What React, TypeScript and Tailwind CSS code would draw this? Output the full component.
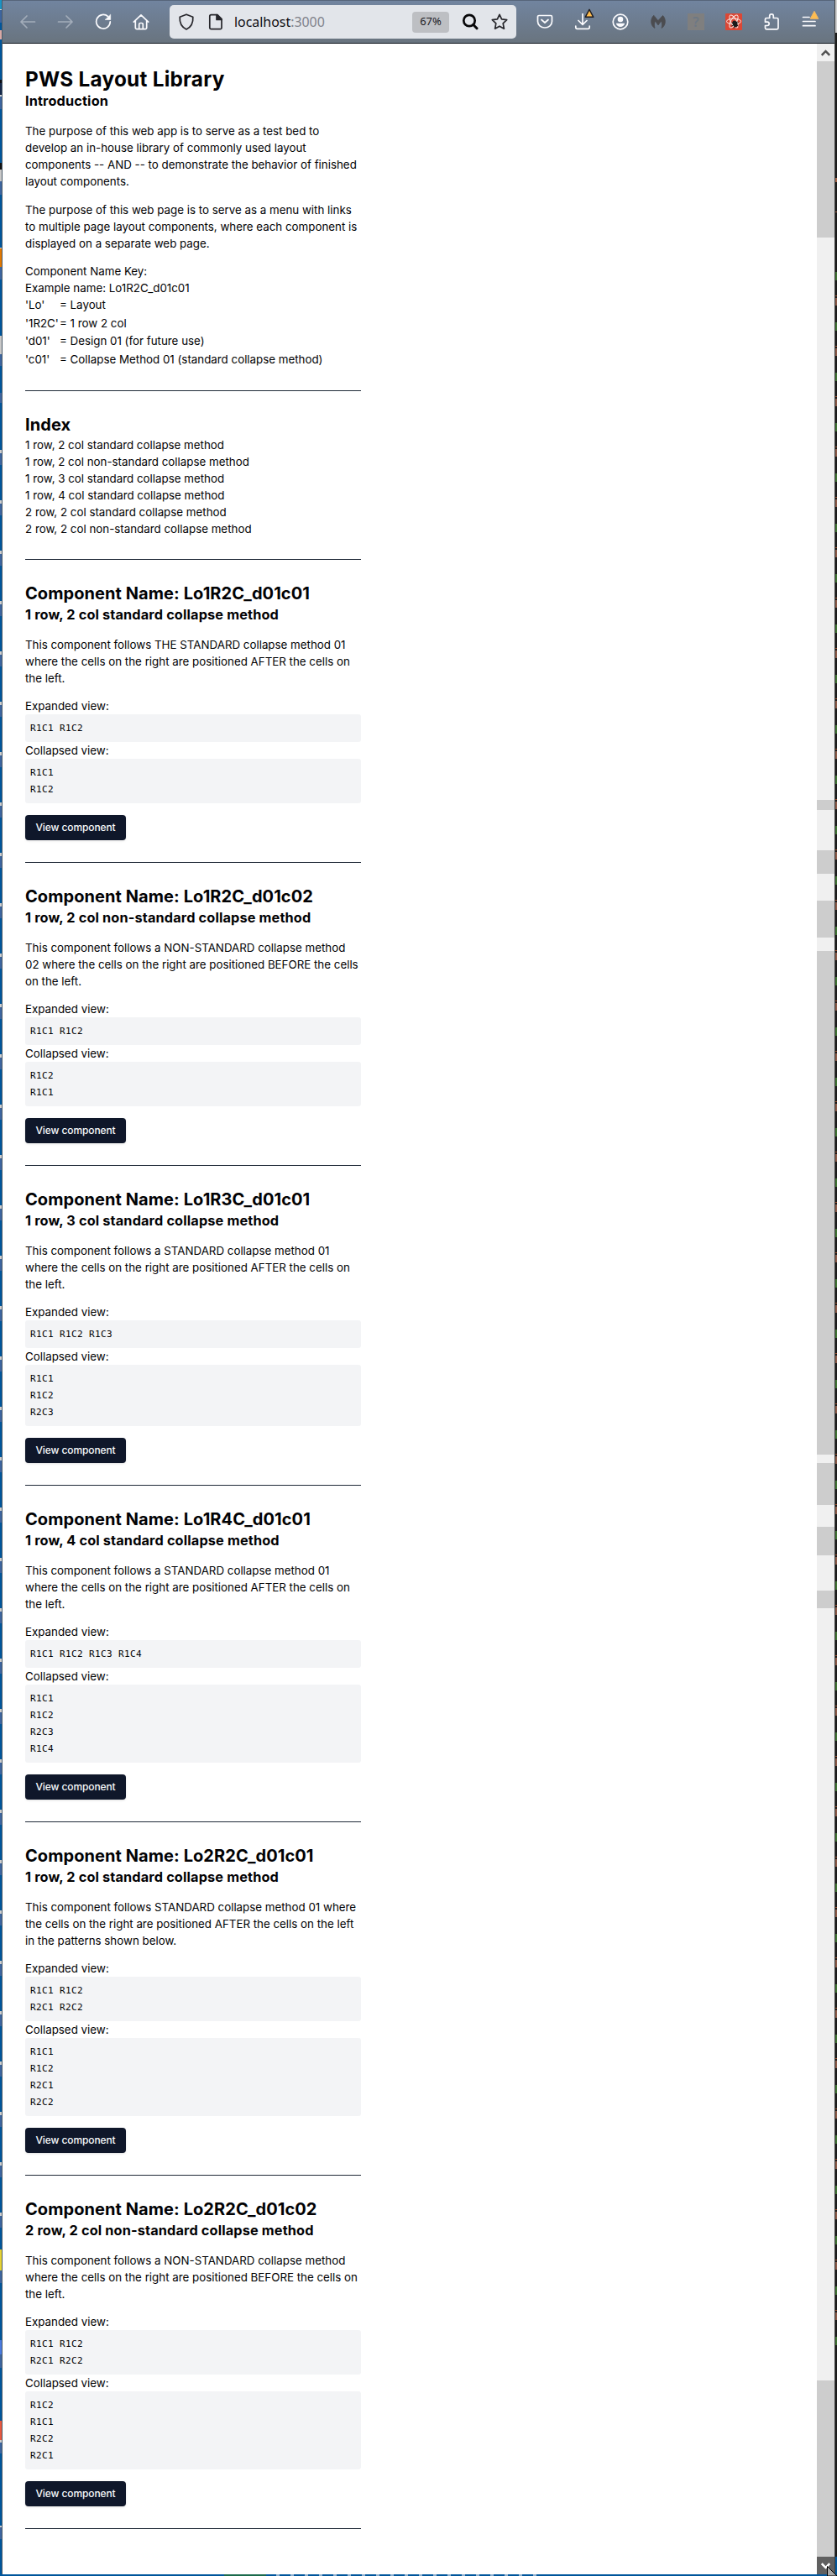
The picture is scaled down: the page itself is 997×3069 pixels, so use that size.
import React from "react";

type Band = { h: string; c: string };

const leftBands: Band[] = [
  { h: "h-[11px]", c: "bg-[#1b93c4]" },
  { h: "h-[1px]", c: "bg-[#d7d7d7]" },
  { h: "h-[15px]", c: "bg-[#3d659f]" },
  { h: "h-[9px]", c: "bg-[#00569c]" },
  { h: "h-[11px]", c: "bg-[#d9a9a5]" },
  { h: "h-[48px]", c: "bg-[#00569c]" },
  { h: "h-[4px]", c: "bg-[#0b0d12]" },
  { h: "h-[14px]", c: "bg-[#14284a]" },
  { h: "h-[2px]", c: "bg-[#d7d7d7]" },
  { h: "h-[15px]", c: "bg-[#3d659f]" },
  { h: "h-[64px]", c: "bg-[#00569c]" },
  { h: "h-[8px]", c: "bg-[#111111]" },
  { h: "h-[14px]", c: "bg-[#c9c9c9]" },
  { h: "h-[16px]", c: "bg-[#3d659f]" },
  { h: "h-[63px]", c: "bg-[#00569c]" },
  { h: "h-[1px]", c: "bg-[#d7d7d7]" },
  { h: "h-[22px]", c: "bg-[#e27800]" },
  { h: "h-[15px]", c: "bg-[#3d659f]" },
  { h: "h-[67px]", c: "bg-[#00569c]" },
  { h: "h-[22px]", c: "bg-[#c9c9c9]" },
  { h: "h-[14px]", c: "bg-[#3d659f]" },
  { h: "h-[32px]", c: "bg-[#00569c]" },
  { h: "h-[12px]", c: "bg-[#3d659f]" },
  { h: "h-[56px]", c: "bg-[#00569c]" },
  {
    h: "h-[2144px]",
    c: "bg-[repeating-linear-gradient(to_bottom,#cfcfcf_0px,#cfcfcf_4px,#3d659f_4px,#3d659f_18px,#00569c_18px,#00569c_60px)]",
  },
  { h: "h-[25px]", c: "bg-[#e6d233]" },
  { h: "h-[15px]", c: "bg-[#3d659f]" },
  { h: "h-[68px]", c: "bg-[#00569c]" },
  { h: "h-[17px]", c: "bg-[#4a7be0]" },
  { h: "h-[16px]", c: "bg-[#3d659f]" },
  { h: "h-[63px]", c: "bg-[#00569c]" },
  { h: "h-[23px]", c: "bg-[#e8583f]" },
  { h: "h-[3px]", c: "bg-[#cfcfcf]" },
  { h: "h-[13px]", c: "bg-[#3d659f]" },
  { h: "h-[86px]", c: "bg-[#00569c]" },
  { h: "h-[2px]", c: "bg-[#cfcfcf]" },
  { h: "h-[14px]", c: "bg-[#3d659f]" },
  { h: "h-[43px]", c: "bg-[#00569c]" },
];

const scrollBands: Band[] = [
  { h: "h-[210px]", c: "bg-[#cdcdcd]" },
  { h: "h-[670px]", c: "bg-[#f0f0f0]" },
  { h: "h-[12px]", c: "bg-[#cdcdcd]" },
  { h: "h-[48px]", c: "bg-[#f0f0f0]" },
  { h: "h-[28px]", c: "bg-[#cdcdcd]" },
  { h: "h-[32px]", c: "bg-[#f0f0f0]" },
  { h: "h-[44px]", c: "bg-[#cdcdcd]" },
  { h: "h-[16px]", c: "bg-[#f0f0f0]" },
  { h: "h-[600px]", c: "bg-[#cdcdcd]" },
  { h: "h-[10px]", c: "bg-[#f0f0f0]" },
  { h: "h-[50px]", c: "bg-[#cdcdcd]" },
  { h: "h-[26px]", c: "bg-[#f0f0f0]" },
  { h: "h-[34px]", c: "bg-[#cdcdcd]" },
  { h: "h-[42px]", c: "bg-[#f0f0f0]" },
  { h: "h-[21px]", c: "bg-[#cdcdcd]" },
  { h: "h-[920px]", c: "bg-[#f0f0f0]" },
  { h: "h-[210px]", c: "bg-[#cdcdcd]" },
];

function Bands({ items }: { items: Band[] }) {
  return (
    <>
      {items.map((b, i) => (
        <div key={i} className={`w-full shrink-0 ${b.h} ${b.c}`} />
      ))}
    </>
  );
}

function Icon({ children, w = 20, className = "" }: { children: React.ReactNode; w?: number; className?: string }) {
  return (
    <svg
      width={w}
      height={w}
      viewBox="0 0 20 20"
      fill="none"
      stroke="currentColor"
      strokeWidth="1.7"
      strokeLinecap="round"
      strokeLinejoin="round"
      className={`shrink-0 ${className}`}
    >
      {children}
    </svg>
  );
}

function Toolbar() {
  return (
    <header className="flex h-[52px] shrink-0 items-center border-t border-b border-t-[#56657a] border-b-[#0d141d] bg-linear-to-b from-[#71849f] to-[#69747f] text-[#fbfbfe]">
      <div className="flex w-[199px] items-center gap-[25px] pl-5">
        <Icon className="text-[#a3adba]">
          <path d="M18.5 10H2M9 3L2 10l7 7" />
        </Icon>
        <Icon className="text-[#a3adba]">
          <path d="M1.500 10H18M11 3l7 7-7 7" />
        </Icon>
        <Icon>
          <path d="M15.600 3.600A8.300 8.300 0 1 0 18.300 9.800" />
          <path d="M18.700 1.500V7.500H12.500Z" fill="currentColor" strokeWidth="0.6" />
        </Icon>
        <Icon>
          <path d="M1.300 10.200L10 1.800l8.700 8.400M3.300 8.500V17a1.700 1.700 0 0 0 1.700 1.700H15a1.700 1.700 0 0 0 1.700-1.700V8.500M7.700 18.500V13a1.500 1.500 0 0 1 1.500-1.500h1.600a1.500 1.500 0 0 1 1.500 1.500v5.500" />
        </Icon>
      </div>
      <div className="flex h-10 w-[413px] items-center rounded-[5px] bg-[#e2e5ea] pl-[10px] text-[#26262b]">
        <Icon>
          <path d="M10 1.200L17.800 4.200C18.200 10 16 16 10 19 4 16 1.800 10 2.200 4.200Z" />
        </Icon>
        <Icon className="ml-[15px]">
          <path d="M4.500 1.700H12l5 5V17a1.700 1.700 0 0 1-1.700 1.700H4.500A1.700 1.700 0 0 1 2.800 17V3.400A1.700 1.700 0 0 1 4.500 1.700Z" />
          <path d="M11 1.500L17.200 7.500H11Z" fill="currentColor" />
        </Icon>
        <div className="ml-3 w-[212px] font-['Noto_Sans'] text-[15.900px] leading-6 text-[#0c0c12]">
          localhost<span className="text-[#80828a]">:3000</span>
        </div>
        <div className="flex h-[25px] w-11 items-center justify-center rounded-[4px] bg-[#bdbfc3] font-['Noto_Sans'] text-[13px] text-[#1a1a1f]">
          67%
        </div>
        <Icon className="ml-[15px] text-[#070709]">
          <circle cx="9" cy="8.500" r="6.700" strokeWidth="2.700" />
          <path d="M13.800 13.500L18 17.800" strokeWidth="3" />
        </Icon>
        <Icon className="ml-[15px]">
          <path d="M10 1.300l2.600 5.600 6.100.8-4.500 4.200 1.200 6.300L10 15.200l-5.400 3 1.200-6.300L1.300 7.700l6.100-.8Z" />
        </Icon>
      </div>
      <div className="ml-6 flex items-center gap-[25px]">
        <Icon>
          <path d="M3 2.500H17a1.500 1.500 0 0 1 1.500 1.500V9.500a8.500 7.500 0 0 1-17 0V4A1.500 1.500 0 0 1 3 2.500ZM6 7.500L10 11l4-3.500" />
        </Icon>
        <div className="relative">
          <Icon>
            <path d="M10 0.500V13M5 8.500L10 13.300l5-4.800M1.800 15v1.500A1.800 1.800 0 0 0 3.600 18.300H16.400A1.800 1.800 0 0 0 18.200 16.500V15" />
          </Icon>
          <svg width="12" height="12" viewBox="0 0 12 12" className="absolute -top-[6px] left-[12px]">
            <path d="M6 1.300L10.800 10.300H1.200Z" fill="#ffbd4f" stroke="#1d1c22" strokeWidth="1.400" strokeLinejoin="round" />
          </svg>
        </div>
        <Icon>
          <circle cx="10" cy="10" r="8.800" />
          <circle cx="10" cy="7" r="3.300" fill="currentColor" stroke="none" />
          <path d="M4.800 11.800H15.200C14.800 14.500 12.500 16 10 16S5.200 14.500 4.800 11.800Z" fill="currentColor" stroke="none" />
        </Icon>
        <Icon className="text-[#4b4c50]">
          <path
            d="M4.500 2.500C.8 6 .8 12.500 4 16L6 17.500C5 14 5.200 11.500 6.500 9L10 14l3.500-5C14.800 11.500 15 14 14 17.500L16 16C19.200 12.500 19.200 6 15.500 2.500L10 8.500Z"
            fill="currentColor"
            strokeWidth="0.8"
          />
        </Icon>
        <div className="flex size-5 items-center justify-center bg-[#7f7f7f] font-['Noto_Sans'] text-[16px] leading-none font-semibold text-[#6d7885]">
          ?
        </div>
        <svg width="20" height="20" viewBox="0 0 20 20" className="rounded-[1px] bg-[#dc4735]">
          <g fill="none" stroke="#fbe9e6" strokeWidth="1">
            <ellipse cx="10" cy="9.500" rx="8.500" ry="3.400" />
            <ellipse cx="10" cy="9.500" rx="8.500" ry="3.400" transform="rotate(60 10 9.500)" />
            <ellipse cx="10" cy="9.500" rx="8.500" ry="3.400" transform="rotate(120 10 9.500)" />
          </g>
          <ellipse cx="11.500" cy="12.500" rx="2.700" ry="4" fill="#1b1b1b" transform="rotate(-25 11.500 12.500)" />
          <path d="M7.500 11l8 4M7.500 15l8-4.500M10 17.500l4-8" stroke="#1b1b1b" strokeWidth="1" />
        </svg>
        <Icon>
          <path d="M7.700 5.500V3.200a2.300 2.300 0 0 1 4.600 0V5.500H16.500a1.500 1.500 0 0 1 1.500 1.500V17.300a1.500 1.500 0 0 1-1.500 1.500H4A1.500 1.500 0 0 1 2.500 17.300V14.500H5a2 2 0 0 0 0-4.300H2.500V7A1.500 1.500 0 0 1 4 5.500Z" />
        </Icon>
        <div className="relative">
          <Icon>
            <path d="M2.500 4.500H10M2.500 9.500H17M2.500 14.700H17" />
          </Icon>
          <svg width="12" height="12" viewBox="0 0 12 12" className="absolute -top-[4px] left-[10px]">
            <path d="M6 1.300L10.800 10.300H1.200Z" fill="#ffbd4f" stroke="#f0b765" strokeWidth="1" strokeLinejoin="round" />
          </svg>
        </div>
      </div>
    </header>
  );
}

const nameKey = [
  { k: "'Lo'", v: "Layout", h: "h-[22px]" },
  { k: "'1R2C'", v: "1 row 2 col", h: "h-[21px]" },
  { k: "'d01'", v: "Design 01 (for future use)", h: "h-[22px]" },
  { k: "'c01'", v: "Collapse Method 01 (standard collapse method)", h: "h-[21px]" },
];

const index = [
  "1 row, 2 col standard collapse method",
  "1 row, 2 col non-standard collapse method",
  "1 row, 3 col standard collapse method",
  "1 row, 4 col standard collapse method",
  "2 row, 2 col standard collapse method",
  "2 row, 2 col non-standard collapse method",
];

type Entry = { name: string; title: string; lines: string[]; expanded: string; collapsed: string };

const entries: Entry[] = [
  {
    name: "Lo1R2C_d01c01",
    title: "1 row, 2 col standard collapse method",
    lines: [
      "This component follows THE STANDARD collapse method 01",
      "where the cells on the right are positioned AFTER the cells on",
      "the left.",
    ],
    expanded: "R1C1 R1C2",
    collapsed: "R1C1\nR1C2",
  },
  {
    name: "Lo1R2C_d01c02",
    title: "1 row, 2 col non-standard collapse method",
    lines: [
      "This component follows a NON-STANDARD collapse method",
      "02 where the cells on the right are positioned BEFORE the cells",
      "on the left.",
    ],
    expanded: "R1C1 R1C2",
    collapsed: "R1C2\nR1C1",
  },
  {
    name: "Lo1R3C_d01c01",
    title: "1 row, 3 col standard collapse method",
    lines: [
      "This component follows a STANDARD collapse method 01",
      "where the cells on the right are positioned AFTER the cells on",
      "the left.",
    ],
    expanded: "R1C1 R1C2 R1C3",
    collapsed: "R1C1\nR1C2\nR2C3",
  },
  {
    name: "Lo1R4C_d01c01",
    title: "1 row, 4 col standard collapse method",
    lines: [
      "This component follows a STANDARD collapse method 01",
      "where the cells on the right are positioned AFTER the cells on",
      "the left.",
    ],
    expanded: "R1C1 R1C2 R1C3 R1C4",
    collapsed: "R1C1\nR1C2\nR2C3\nR1C4",
  },
  {
    name: "Lo2R2C_d01c01",
    title: "1 row, 2 col standard collapse method",
    lines: [
      "This component follows STANDARD collapse method 01 where",
      "the cells on the right are positioned AFTER the cells on the left",
      "in the patterns shown below.",
    ],
    expanded: "R1C1 R1C2\nR2C1 R2C2",
    collapsed: "R1C1\nR1C2\nR2C1\nR2C2",
  },
  {
    name: "Lo2R2C_d01c02",
    title: "2 row, 2 col non-standard collapse method",
    lines: [
      "This component follows a NON-STANDARD collapse method",
      "where the cells on the right are positioned BEFORE the cells on",
      "the left.",
    ],
    expanded: "R1C1 R1C2\nR2C1 R2C2",
    collapsed: "R1C2\nR1C1\nR2C2\nR2C1",
  },
];

function Lines({ lines }: { lines: string[] }) {
  return (
    <p className="whitespace-nowrap">
      {lines.map((l) => (
        <span key={l} className="block">
          {l}
        </span>
      ))}
    </p>
  );
}

function Heading({ children }: { children: React.ReactNode }) {
  return (
    <h2 className="text-[20px] leading-[26px] font-bold tracking-[0.07px] whitespace-nowrap">{children}</h2>
  );
}

function SubHeading({ children }: { children: React.ReactNode }) {
  return (
    <h3 className="text-[16.300px] leading-6 font-bold tracking-[0.14px] whitespace-nowrap">{children}</h3>
  );
}

function Code({ text }: { text: string }) {
  return (
    <pre className="rounded-[3px] bg-[#f3f4f6] px-[6px] pt-[7px] pb-[6px] font-['DejaVu_Sans_Mono',monospace] text-[11px] leading-5 tracking-[0.38px]">
      {text}
    </pre>
  );
}

function Section({ entry }: { entry: Entry }) {
  return (
    <section className="border-b border-[#1f2937] pt-[27px] pb-[26px]">
      <Heading>Component Name: {entry.name}</Heading>
      <SubHeading>{entry.title}</SubHeading>
      <div className="mt-[14px] mb-[13px]">
        <Lines lines={entry.lines} />
      </div>
      <div>Expanded view:</div>
      <Code text={entry.expanded} />
      <div>Collapsed view:</div>
      <Code text={entry.collapsed} />
      <button className="mt-[14px] block h-[30px] w-[120px] rounded-[4px] bg-[#0f172a] text-[12px] leading-[30px] font-medium tracking-[-0.1px] text-[#f8fafc] shadow-sm">
        View component
      </button>
    </section>
  );
}

export default function App() {
  return (
    <div className="flex h-[3069px] w-[997px] flex-col overflow-hidden bg-[#00569c]">
      <div className="flex h-[3067px] shrink-0">
        <div className="flex w-[3px] shrink-0 flex-col overflow-hidden border-r border-[#4a5a68]">
          <Bands items={leftBands} />
        </div>
        <div className="flex w-[991px] shrink-0 flex-col bg-white">
          <Toolbar />
          <div className="flex grow">
            <main className="w-[970px] pt-7 pl-[27px] font-['Inter',sans-serif] text-[13.333px] leading-5 tracking-normal text-[#020204]">
              <div className="w-[400px]">
                <section className="h-[386px] border-b border-[#1f2937]">
                  <h1 className="text-[24.300px] leading-7 font-bold tracking-[0.26px]">PWS Layout Library</h1>
                  <SubHeading>Introduction</SubHeading>
                  <div className="mt-[14px]">
                    <Lines
                      lines={[
                        "The purpose of this web app is to serve as a test bed to",
                        "develop an in-house library of commonly used layout",
                        "components -- AND -- to demonstrate the behavior of finished",
                        "layout components.",
                      ]}
                    />
                  </div>
                  <div className="mt-[14px]">
                    <Lines
                      lines={[
                        "The purpose of this web page is to serve as a menu with links",
                        "to multiple page layout components, where each component is",
                        "displayed on a separate web page.",
                      ]}
                    />
                  </div>
                  <div className="mt-[13px]">Component Name Key:</div>
                  <div>Example name: Lo1R2C_d01c01</div>
                  {nameKey.map((r) => (
                    <div key={r.k} className={`flex whitespace-nowrap ${r.h}`}>
                      <span className="w-[41px]">{r.k}</span>
                      <span>= {r.v}</span>
                    </div>
                  ))}
                </section>
                <section className="border-b border-[#1f2937] pt-[27px] pb-[26px]">
                  <Heading>Index</Heading>
                  <ul className="mt-px">
                    {index.map((t) => (
                      <li key={t}>{t}</li>
                    ))}
                  </ul>
                </section>
                {entries.map((e) => (
                  <Section key={e.name} entry={e} />
                ))}
              </div>
            </main>
            <div className="flex w-[21px] flex-col">
              <div className="flex h-[21px] shrink-0 items-center justify-center bg-[#f0f0f0]">
                <svg width="11" height="8" viewBox="0 0 11 8" fill="none" stroke="#505050" strokeWidth="2.500">
                  <path d="M0.800 6.800L5.500 2l4.700 4.800" />
                </svg>
              </div>
              <Bands items={scrollBands} />
              <div className="relative flex h-[21px] shrink-0 items-center justify-center bg-[#606060]">
                <svg width="11" height="8" viewBox="0 0 11 8" fill="none" stroke="#ffffff" strokeWidth="2.500">
                  <path d="M0.800 1.200L5.500 6l4.700-4.800" />
                </svg>
                <svg width="12" height="12" viewBox="0 0 12 12" className="absolute right-[-3px] bottom-[-2px]">
                  <path d="M0.500 0.500V12H12Z" fill="#a8a8a8" stroke="#000000" />
                </svg>
              </div>
            </div>
          </div>
        </div>
        <div className="flex w-[3px] shrink-0 flex-col border-l border-[#3f3f3f] bg-[#1b1b1b]">
          <div className="h-[39px] w-full bg-[#cfcfcf]" />
          <div className="h-[173px] w-full" />
          <div className="h-[5px] w-full bg-[#a5664a]" />
          <div className="h-[35px] w-full" />
          <div className="h-[1px] w-full bg-[#a5664a]" />
          <div className="h-[51px] w-full" />
          <div className="h-[2500px] w-full bg-[repeating-linear-gradient(to_bottom,#1b1b1b_0px,#1b1b1b_20px,#3f7233_20px,#3f7233_30px,#1b1b1b_30px,#1b1b1b_48px,#a04f2c_48px,#a04f2c_49px,#1b1b1b_49px,#1b1b1b_51px,#8a5a48_51px,#8a5a48_60px)]" />
          <div className="h-[242px] w-full" />
          <div className="h-[21px] w-full bg-[#00569c]" />
        </div>
      </div>
      <div className="flex h-[2px]">
        <div className="w-[267px]" />
        <div className="w-[50px] bg-[#1b6b4c]" />
        <div className="w-[12px]" />
        <div className="w-[320px] bg-[repeating-linear-gradient(to_right,#8fb1d0_0px,#8fb1d0_4px,#00569c_4px,#00569c_17px)]" />
      </div>
    </div>
  );
}
